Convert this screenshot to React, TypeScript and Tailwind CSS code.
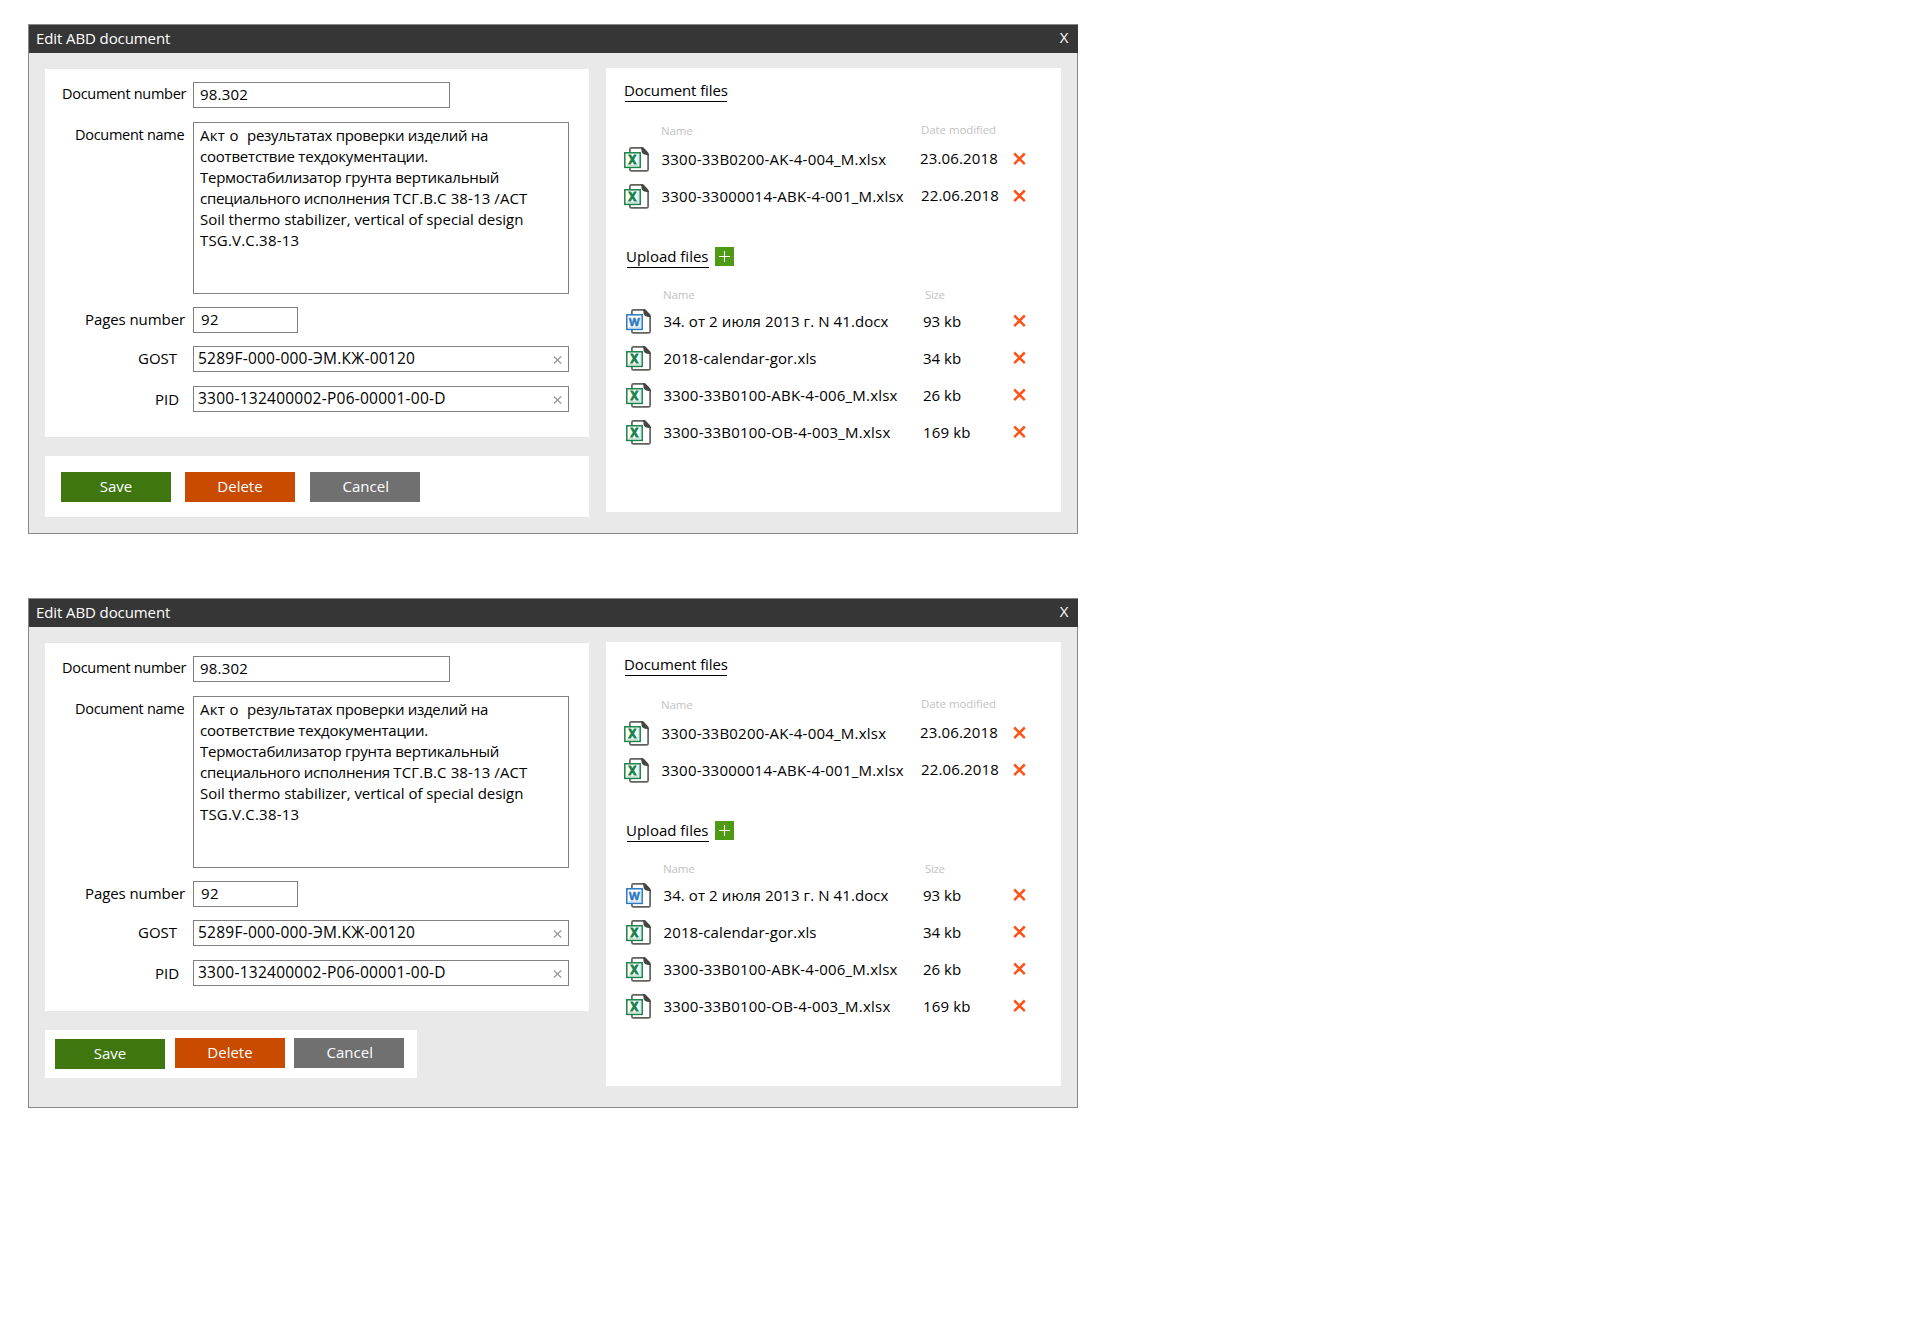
import React from 'react';

type IconKind = 'excel' | 'word';

function FileIcon({ kind }: { kind: IconKind }) {
  const color = kind === 'excel' ? '#16834a' : '#2b78c2';
  return (
    <svg width="25" height="25" viewBox="0 0 25 25" className="shrink-0">
      <path
        d="M5.9 6V2.4Q5.9 .9 7.4 .9H17.5L24.1 7.8V22.4Q24.1 23.9 22.6 23.9H7.4Q5.9 23.9 5.9 22.4V20"
        fill="#fff"
        stroke="#62625c"
        strokeWidth="1.7"
      />
      <path d="M17.2 .1H18.2Q19.2 .2 20 1L24 5.2Q25 6.3 25 8.6L23.4 8.1Q18.2 7.6 17.6 4.4Z" fill="#454541" />
      <rect x=".8" y="5.8" width="15.4" height="14.6" fill="#fff" stroke={color} strokeWidth="1.5" />
      <path d="M2.7 18.4H14.2V7.7" fill="none" stroke={color} strokeOpacity=".25" strokeWidth="1" />
      <text
        x="8.4"
        y="17"
        textAnchor="middle"
        fill={color}
        stroke={color}
        strokeWidth={kind === 'excel' ? 0.9 : 0.5}
        fontFamily="'Open Sans', sans-serif"
        fontWeight="700"
        fontSize={kind === 'excel' ? 11.5 : 11}
      >
        {kind === 'excel' ? 'X' : 'W'}
      </text>
    </svg>
  );
}

function RemoveIcon() {
  return (
    <svg width="13" height="13" viewBox="0 0 13 13" className="block">
      <path d="M1.2 1.5 11.8 12.1M11.8 1.5 1.2 12.1" stroke="#ff5216" strokeWidth="2.5" />
    </svg>
  );
}

function ClearIcon() {
  return (
    <svg width="9" height="8" viewBox="0 0 9 8" className="block">
      <path d="M.8 .5 8.2 7.5M8.2 .5 .8 7.5" stroke="#999" strokeWidth="1.3" />
    </svg>
  );
}

function Field({ label, labelClass, children }: { label: string; labelClass: string; children: React.ReactNode }) {
  return (
    <div className="flex items-start">
      <div className={`w-[148px] shrink-0 leading-5 whitespace-nowrap ${labelClass}`}>{label}</div>
      {children}
    </div>
  );
}

function ClearableInput({ value, className }: { value: string; className: string }) {
  return (
    <div className="flex h-[26px] w-[376px] justify-between border border-[#808080] bg-white pt-px pr-[6.5px] pl-1 text-[15.5px] leading-5">
      <span className={className}>{value}</span>
      <span className="pt-[8px]">
        <ClearIcon />
      </span>
    </div>
  );
}

type Run = { text: string; className: string };

const description: Run[][] = [
  [
    { text: 'Акт о  ', className: 'tracking-[0.3px]' },
    { text: 'результатах проверки изделий на', className: 'tracking-[-0.31px]' },
  ],
  [{ text: 'соответствие техдокументации.', className: 'tracking-[-0.21px]' }],
  [{ text: 'Термостабилизатор грунта вертикальный', className: 'tracking-[-0.26px]' }],
  [
    { text: 'специального исполнения ', className: 'tracking-[-0.29px]' },
    { text: 'ТСГ.В.С 38-13 /АСТ', className: 'tracking-[0.11px]' },
  ],
  [{ text: 'Soil thermo stabilizer, vertical of special design', className: 'tracking-[-0.04px]' }],
  [{ text: 'TSG.V.C.38-13', className: 'tracking-[0.19px]' }],
];

function DocumentForm() {
  return (
    <div className="h-[368px] w-[544px] bg-white pt-[13px]">
      <Field label="Document number" labelClass="pt-0.5 pl-[17px] text-[14.5px] tracking-[-0.3px]">
        <div className="h-[26px] w-[257px] border border-[#808080] pt-px pl-1.5 leading-5 tracking-[0.2px]">98.302</div>
      </Field>
      <div className="mt-3.5">
        <Field label="Document name" labelClass="pt-[3px] pl-[30px] text-[14.5px] tracking-[-0.28px]">
          <div className="h-[172px] w-[376px] border border-[#808080] pt-0.5 pl-1.5 leading-[21px]">
            {description.map((line, index) => (
              <div key={index} className="whitespace-pre">
                {line.map((run) => (
                  <span key={run.text} className={run.className}>
                    {run.text}
                  </span>
                ))}
              </div>
            ))}
          </div>
        </Field>
      </div>
      <div className="mt-[13px]">
        <Field label="Pages number" labelClass="pt-0.5 pl-10 tracking-[-0.08px]">
          <div className="h-[26px] w-[105px] border border-[#808080] pt-px pl-[7px] leading-5 tracking-[0.5px]">92</div>
        </Field>
      </div>
      <div className="mt-[13px]">
        <Field label="GOST" labelClass="pt-0.5 pl-[93px]">
          <ClearableInput value="5289F-000-000-ЭМ.КЖ-00120" className="tracking-[0.24px]" />
        </Field>
      </div>
      <div className="mt-3.5">
        <Field label="PID" labelClass="pt-[3px] pl-[110px]">
          <ClearableInput value="3300-132400002-P06-00001-00-D" className="tracking-[0.25px]" />
        </Field>
      </div>
    </div>
  );
}

type FileRowData = { kind: IconKind; name: string; nameClass: string; detail: string; detailClass: string };

const documentFiles: FileRowData[] = [
  { kind: 'excel', name: '3300-33B0200-AK-4-004_M.xlsx', nameClass: 'tracking-[0.23px]', detail: '23.06.2018', detailClass: 'tracking-[0.15px]' },
  { kind: 'excel', name: '3300-33000014-ABK-4-001_M.xlsx', nameClass: 'tracking-[0.23px]', detail: '22.06.2018', detailClass: 'pl-px tracking-[0.15px]' },
];

const uploadFiles: FileRowData[] = [
  { kind: 'word', name: '34. от 2 июля 2013 г. N 41.docx', nameClass: 'tracking-[0.09px]', detail: '93 kb', detailClass: 'pt-px' },
  { kind: 'excel', name: '2018-calendar-gor.xls', nameClass: 'tracking-[0.12px]', detail: '34 kb', detailClass: 'pt-px' },
  { kind: 'excel', name: '3300-33B0100-ABK-4-006_M.xlsx', nameClass: 'tracking-[0.21px]', detail: '26 kb', detailClass: 'pt-px' },
  { kind: 'excel', name: '3300-33B0100-OB-4-003_M.xlsx', nameClass: 'tracking-[0.21px]', detail: '169 kb', detailClass: 'pt-px tracking-[0.15px]' },
];

function FileRow({ row, nameWidth, detailWidth }: { row: FileRowData; nameWidth: string; detailWidth: string }) {
  return (
    <div className="flex h-[37px] items-start whitespace-nowrap leading-5">
      <FileIcon kind={row.kind} />
      <span className={`ml-[12.5px] pt-0.5 ${nameWidth} ${row.nameClass}`}>{row.name}</span>
      <span className={`pt-px ${detailWidth}`}>
        <span className={`block ${row.detailClass}`}>{row.detail}</span>
      </span>
      <span className="pt-[5px]">
        <RemoveIcon />
      </span>
    </div>
  );
}

function FilesPanel() {
  return (
    <div className="h-[444px] w-[455px] bg-white pt-3 pl-[18px]">
      <div className="leading-5 tracking-[-0.1px]">Document files</div>
      <div className="mt-px ml-px h-px w-[102px] bg-black" />
      <div className="mt-5 flex h-[25px] text-[11.5px] leading-4 text-[#c2c2c2]">
        <span className="w-[260px] pt-px pl-[37px] tracking-[-0.15px]">Name</span>
        <span className="pl-[37px] tracking-[-0.08px]">Date modified</span>
      </div>
      {documentFiles.map((row) => (
        <FileRow key={row.name} row={row} nameWidth="w-[258.5px]" detailWidth="w-[93px]" />
      ))}
      <div className="mt-[25px] flex">
        <div>
          <div className="ml-0.5 leading-5">Upload files</div>
          <div className="mt-px ml-[3px] h-px w-[82px] bg-black" />
        </div>
        <svg width="19" height="19" viewBox="0 0 19 19" className="mt-px ml-1.5">
          <rect width="19" height="19" fill="#4f9a14" />
          <path d="M4 9.5H15M9.5 4V15" stroke="#fff" strokeWidth="1.1" />
        </svg>
      </div>
      <div className="mt-[19px] flex h-[22px] text-[11.5px] leading-4 text-[#c2c2c2]">
        <span className="w-[260px] pl-[39px] tracking-[-0.15px]">Name</span>
        <span className="pl-[41px] tracking-[-0.4px]">Size</span>
      </div>
      <div className="ml-0.5">
        {uploadFiles.map((row) => (
          <FileRow key={row.name} row={row} nameWidth="w-[259.5px]" detailWidth="w-[90px]" />
        ))}
      </div>
    </div>
  );
}

function Button({ label, className }: { label: string; className: string }) {
  return (
    <button type="button" className={`h-[30px] w-[110px] pb-0.5 text-center leading-5 text-white ${className}`}>
      {label}
    </button>
  );
}

function Dialog({ actions }: { actions: React.ReactNode }) {
  return (
    <section className="h-[510px] w-[1050px] border border-[#888] bg-[#e9e9e9]">
      <header className="-mr-px flex h-7 justify-between bg-[#363636] pr-[9.5px] pl-[7px] leading-5 text-white">
        <span className="pt-[3px] tracking-[-0.1px]">Edit ABD document</span>
        <span className="pt-0.5">X</span>
      </header>
      <div className="flex pl-4">
        <div className="pt-4">
          <DocumentForm />
          {actions}
        </div>
        <div className="pt-[15px] pl-[17px]">
          <FilesPanel />
        </div>
      </div>
    </section>
  );
}

export default function App() {
  return (
    <main className="flex min-h-[1326px] flex-col gap-16 bg-white pt-6 pl-7 font-['Open_Sans','Noto_Sans',sans-serif] text-[15px] text-black">
      <Dialog
        actions={
          <div className="mt-[19px] flex h-[61px] w-[544px] bg-white pt-4 pl-4">
            <Button label="Save" className="bg-[#3f760f]" />
            <Button label="Delete" className="ml-3.5 bg-[#c84b00]" />
            <Button label="Cancel" className="ml-[15px] bg-[#707070] pl-[1.5px]" />
          </div>
        }
      />
      <Dialog
        actions={
          <div className="mt-[19px] flex h-12 w-[372px] bg-white pt-2 pl-2.5">
            <Button label="Save" className="mt-px bg-[#3f760f]" />
            <Button label="Delete" className="ml-2.5 bg-[#c84b00]" />
            <Button label="Cancel" className="ml-[9px] bg-[#707070] pl-[1.5px]" />
          </div>
        }
      />
    </main>
  );
}
